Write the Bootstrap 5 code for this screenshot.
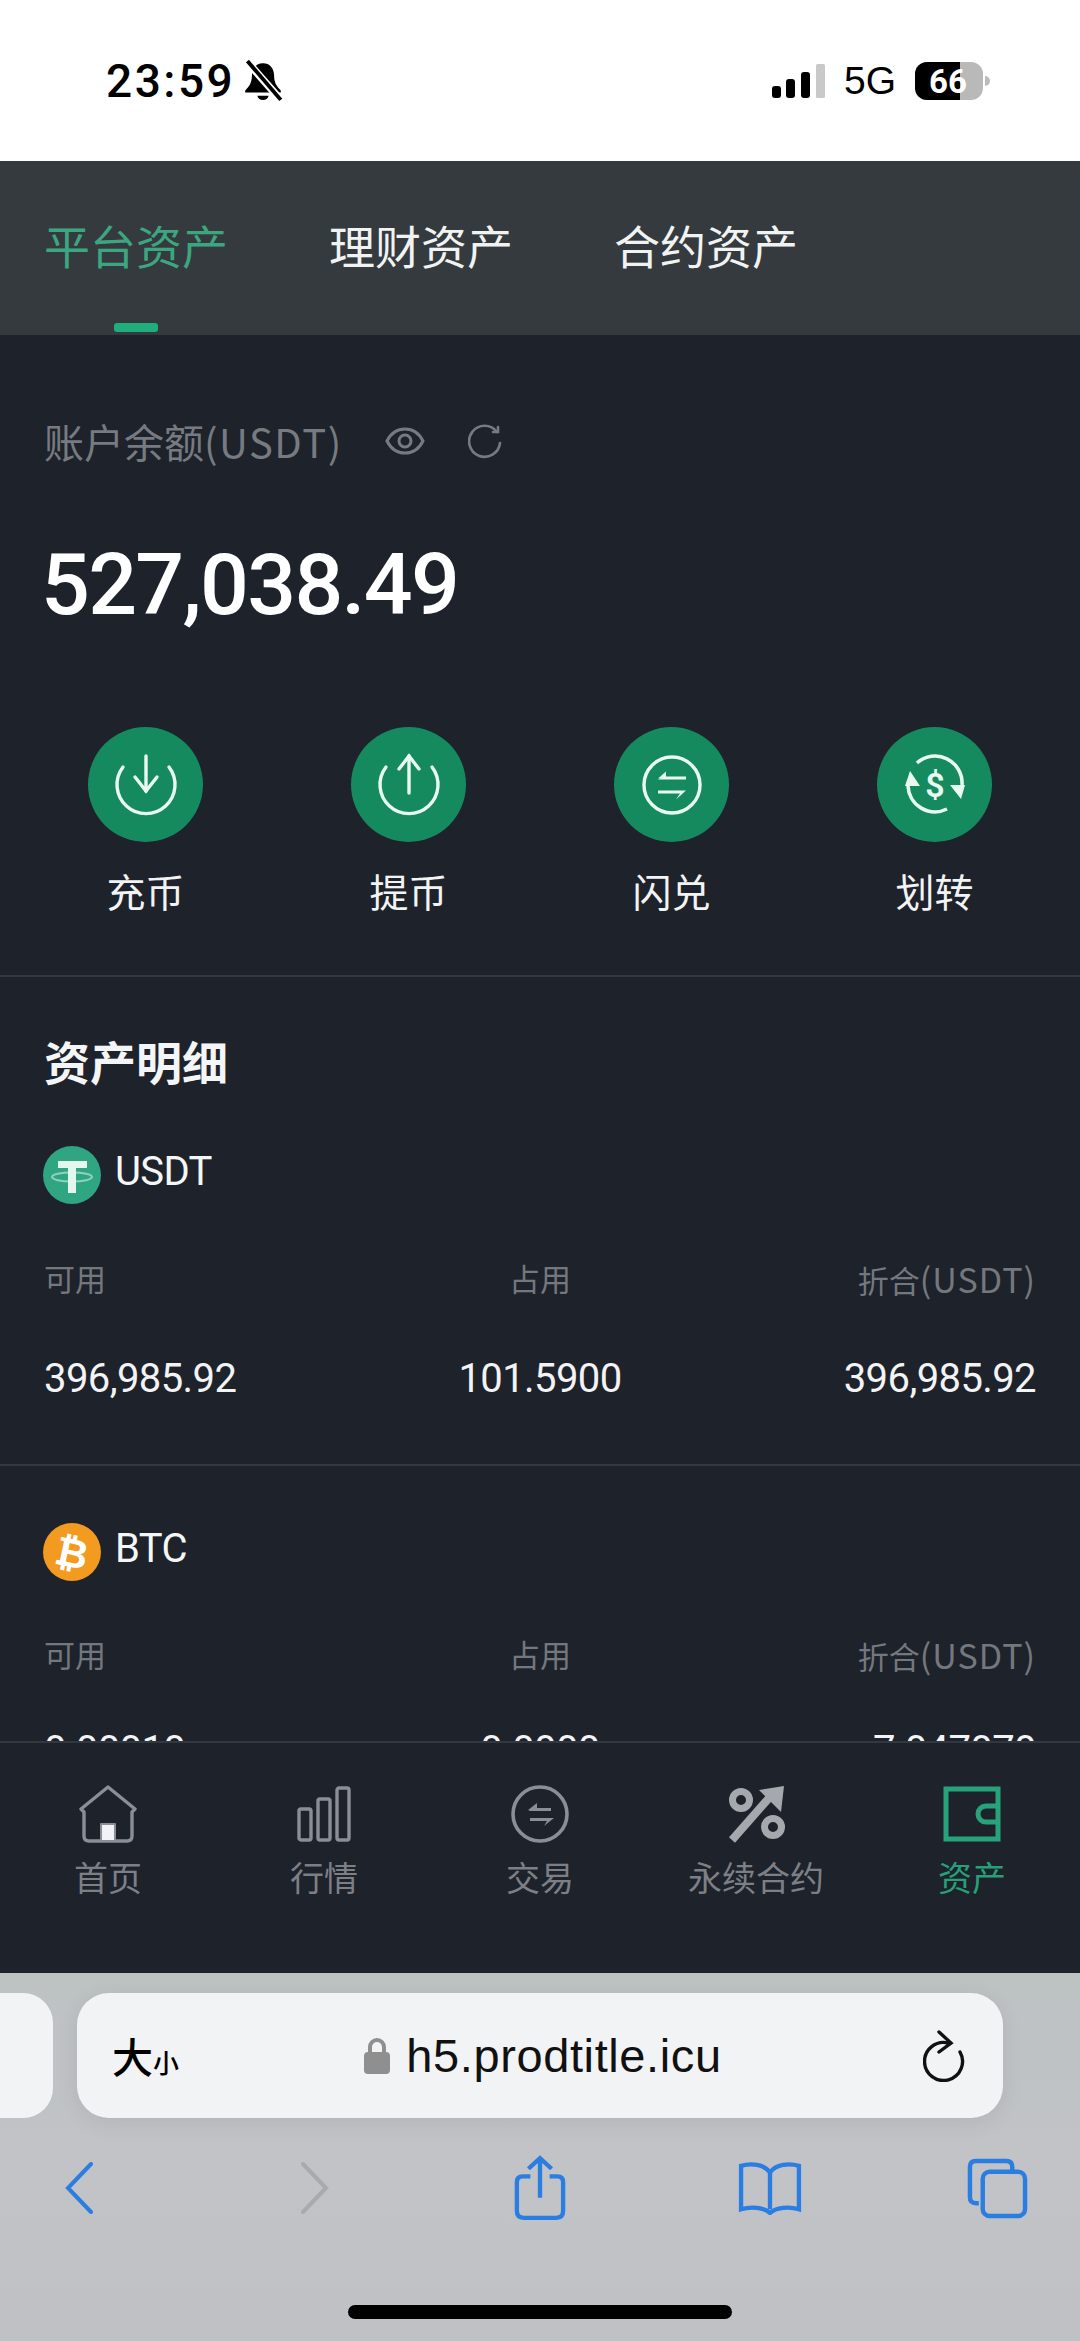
<!doctype html>
<html lang="zh"><head><meta charset="utf-8">
<link href="https://cdn.jsdelivr.net/npm/bootstrap@5.3.0/dist/css/bootstrap.min.css" rel="stylesheet">
<style>
html,body{margin:0;background:#1e222b}
body{width:1080px;height:2341px;overflow:hidden;font-family:"Noto Sans CJK SC",Roboto,sans-serif}
.num{font-family:Roboto,"Noto Sans CJK SC",sans-serif}
.shell{height:2341px}
.sysbar{height:161px;background:#fff;color:#000;padding:0 90px 0 106px}
.clock{font:500 46px/1 Roboto,sans-serif;letter-spacing:2.5px}
.net{font:400 39px/1 "Liberation Sans",sans-serif;margin:0 19px 0 19px}
.tabbar{height:174px;background:#343a3e;padding-left:44px;gap:101px;padding-bottom:8px}
.tabitem{font-size:46px;line-height:1;color:#f1f3f3;font-weight:400}
.tabon{color:#3ca681}
.tabmark{left:70px;bottom:-65px;width:44px;height:9px;background:#1fae7b;border-radius:3px}
.scroller{height:1406px;overflow:hidden}
.topwrap{height:642px;padding:0 44px;border-bottom:2px solid #33373f}
.ballabel{color:#777b81;font-size:40px;line-height:1;padding-top:86px;font-weight:400}
.balunit{letter-spacing:1.5px}
.eyeicon{margin-left:42px}
.reloadicon{margin-left:43px}
.bigval{font-size:86px;line-height:1;color:#fff;font-weight:500;margin:81px 0 0 -3px;letter-spacing:-1.7px}
.actions{margin-top:99px;margin-left:-44px;margin-right:-44px;padding:0 0 0 14px}
.actbtn{width:263px}
.actcirc{width:115px;height:115px;background:#158a5f}
.actlabel{font-size:39px;line-height:1;color:#f2f3f4;margin-top:29px;font-weight:400}
.sect{padding:0 44px}
.headline{font-size:46px;line-height:1;color:#f4f5f6;font-weight:600;padding-top:60px}
.coinrow{margin:63px 0 0 -1px;height:58px}
.coinname{font-size:40px;color:#f5f6f7;line-height:1;margin:-6px 0 0 14px;letter-spacing:-.6px}
.colhead{font-size:31px;line-height:1;color:#74787e;font-weight:400;margin-top:58px}
.colhead.tight{margin-top:57px}
.unitwide{font-size:34px;letter-spacing:1px}
.colval{font-size:40px;line-height:1;color:#f2f3f4;margin-top:63px;letter-spacing:-.6px}
.colval.peek{margin-top:59px}
.third{width:33.333%}
.divide{border-top:2px solid #33373f;margin:65px -44px 0}
.coinrow.coin2{margin-top:57px}
.tabnav{height:232px;border-top:2px solid #33373f;background:#1e222b;padding-top:42px}
.navlabel{font-size:34px;line-height:1;color:#7c8086;margin-top:17px;font-weight:400}
.navon{color:#27a07a}
.navicon{height:58px}
.navicon svg{display:block;margin:0 auto}
.safari{height:368px;background:linear-gradient(180deg,#bdc2c3,#c1c3c6 50%,#bfc1c4)}
.urlrow{padding-top:20px;gap:24px;height:145px}
.sidepill{width:53px;height:125px;background:#f2f3f4;border-radius:0 30px 30px 0}
.urlpill{width:926px;height:125px;background:#f2f3f4;border-radius:32px;padding:0 38px 0 35px;box-shadow:0 4px 22px rgba(0,0,0,.08)}
.urlside{flex:0 0 100px}
.urlside.leftside{flex-basis:109px}
.aa{font-size:41px;color:#000;font-weight:500;line-height:1}
.aa small{font-size:26px}
.urltext{font:400 47px/1 "Liberation Sans",sans-serif;color:#111;letter-spacing:.6px}
.tools{height:88px;margin-top:26px;padding-left:65px}
.tool2{margin-left:208px}
.tool3{margin-left:185px}
.tool4{margin-left:171px}
.tool5{margin-left:164px}
.homebar{width:384px;height:14px;background:#000;border-radius:7px;margin:73px auto 0}
</style></head>
<body>
<div class="shell d-flex flex-column">
  <header class="sysbar d-flex justify-content-between align-items-center">
    <div class="d-flex align-items-center gap-2">
      <span class="clock">23:59</span>
      <svg width="40" height="42" viewBox="0 0 36 40" preserveAspectRatio="none"><path d="M18 3c7 0 10 6 10 12 0 6 2 10 6 14v2H2v-2c4-4 6-8 6-14C8 9 11 3 18 3z" fill="#000"/><path d="M13 34h10a5 4 0 0 1-10 0z" fill="#000"/><path d="M4 2l30 36" stroke="#fff" stroke-width="7"/><path d="M4 1l30 37" stroke="#000" stroke-width="3.5"/></svg>
    </div>
    <div class="d-flex align-items-center">
      <svg width="53" height="34" viewBox="0 0 53 34"><rect x="0" y="22" width="9" height="12" rx="3" fill="#000"/><rect x="14" y="15" width="9" height="19" rx="3" fill="#000"/><rect x="29" y="8" width="9" height="26" rx="3" fill="#000"/><rect x="44" y="0" width="9" height="34" rx="1.5" fill="#c9c9c9"/></svg>
      <span class="net">5G</span>
      <svg width="75" height="38" viewBox="0 0 75 38"><rect x="0" y="0" width="68" height="38" rx="12" fill="#b9b9b9"/><path d="M12 0h33v38H12A12 12 0 0 1 0 26V12A12 12 0 0 1 12 0z" fill="#000"/><path d="M70 14a5 5 0 0 1 0 10z" fill="#bbb"/><text x="33" y="31" text-anchor="middle" font-family="Roboto,sans-serif" font-weight="700" font-size="33" fill="#fff">66</text></svg>
    </div>
  </header>
  <nav class="tabbar d-flex align-items-center">
    <span class="tabitem tabon position-relative">平台资产<span class="tabmark position-absolute"></span></span>
    <span class="tabitem">理财资产</span>
    <span class="tabitem">合约资产</span>
  </nav>
  <main class="scroller">
    <section class="topwrap">
      <div class="ballabel d-flex align-items-center"><span>账户余额<span class="balunit">(USDT)</span></span>
        <svg class="eyeicon" width="40" height="28" viewBox="0 0 40 28" fill="none" stroke="#777b81" stroke-width="3"><path d="M2 14C6 6 12 2 20 2s14 4 18 12c-4 8-10 12-18 12S6 22 2 14z"/><circle cx="20" cy="14" r="6"/></svg>
        <svg class="reloadicon" width="34" height="36" viewBox="0 0 34 36" fill="none" stroke="#777b81" stroke-width="2.6" stroke-linecap="round"><path d="M29 9A15.5 15.5 0 1 0 32 20"/><path d="M30 4v5h-5"/></svg>
      </div>
      <div class="bigval num">527,038.49</div>
      <div class="actions d-flex justify-content-start">
        <div class="actbtn d-flex flex-column align-items-center"><div class="actcirc rounded-circle d-flex align-items-center justify-content-center">
          <svg width="64" height="64" viewBox="0 0 64 64" fill="none" stroke="#e9fbf1" stroke-width="3.4" stroke-linecap="round"><path d="M9 14A29 29 0 1 0 55 14"/><path d="M32 3v35"/><path d="M21 24l11 14 11-14" stroke-linejoin="miter"/></svg></div><div class="actlabel">充币</div></div>
        <div class="actbtn d-flex flex-column align-items-center"><div class="actcirc rounded-circle d-flex align-items-center justify-content-center">
          <svg width="64" height="64" viewBox="0 0 64 64" fill="none" stroke="#e9fbf1" stroke-width="3.4" stroke-linecap="round"><path d="M9 14A29 29 0 1 0 55 14"/><path d="M32 40V3"/><path d="M22 16L32 3l10 13"/></svg></div><div class="actlabel">提币</div></div>
        <div class="actbtn d-flex flex-column align-items-center"><div class="actcirc rounded-circle d-flex align-items-center justify-content-center">
          <svg width="64" height="64" viewBox="0 0 64 64" fill="none" stroke="#e9fbf1" stroke-width="3.4"><circle cx="32" cy="32" r="28"/><path d="M18 26.5h28v-3H24z" fill="#e9fbf1" stroke="none"/><path d="M46 37.500H18v3h22l-4 6z" fill="#e9fbf1" stroke="none"/><path d="M18 25.500l8-7v7z" fill="#e9fbf1" stroke="none"/></svg></div><div class="actlabel">闪兑</div></div>
        <div class="actbtn d-flex flex-column align-items-center"><div class="actcirc rounded-circle d-flex align-items-center justify-content-center">
          <svg width="64" height="64" viewBox="0 0 64 64" fill="none" stroke="#e9fbf1" stroke-width="3.6"><path d="M14 10A27 27 0 0 1 59 32"/><path d="M44 56A27 27 0 0 1 5 33"/><path d="M47 32h15l-4 14z" fill="#e9fbf1" stroke="none"/><path d="M2 33h15l-10-15z" fill="#e9fbf1" stroke="none"/><text x="32" y="44" text-anchor="middle" font-family="Roboto,sans-serif" font-weight="600" font-size="34" fill="#e9fbf1" stroke="none">$</text></svg></div><div class="actlabel">划转</div></div>
      </div>
    </section>
    <section class="sect">
      <div class="headline">资产明细</div>
      <div class="coinrow d-flex align-items-center">
        <svg width="58" height="58" viewBox="0 0 58 58"><circle cx="29" cy="29" r="29" fill="#2fa582"/><ellipse cx="29" cy="31" rx="20" ry="4.500" fill="none" stroke="#8ed3bb" stroke-width="2"/><path d="M15 15h29v7H33v25h-8V22H15z" fill="#e4f7ef"/></svg>
        <span class="coinname num">USDT</span>
      </div>
      <div class="d-flex justify-content-between colhead"><span class="third">可用</span><span class="third text-center">占用</span><span class="third text-end">折合<span class="unitwide">(USDT)</span></span></div>
      <div class="d-flex justify-content-between colval num"><span class="third">396,985.92</span><span class="third text-center">101.5900</span><span class="third text-end">396,985.92</span></div>
      <div class="divide"></div>
      <div class="coinrow coin2 d-flex align-items-center">
        <svg width="58" height="58" viewBox="0 0 58 58"><circle cx="29" cy="29" r="29" fill="#f39a20"/><text x="29" y="44" text-anchor="middle" transform="rotate(12 29 29)" font-family="Roboto,sans-serif" font-weight="700" font-size="40" fill="#fff">₿</text></svg>
        <span class="coinname num">BTC</span>
      </div>
      <div class="d-flex justify-content-between colhead tight"><span class="third">可用</span><span class="third text-center">占用</span><span class="third text-end">折合<span class="unitwide">(USDT)</span></span></div>
      <div class="d-flex justify-content-between colval peek num"><span class="third">0.00010</span><span class="third text-center">0.0000</span><span class="third text-end">7.047070</span></div>
    </section>
  </main>
  <footer class="tabnav row row-cols-5 g-0 text-center">
    <div class="col"><div class="navicon"><svg width="58" height="58" viewBox="0 0 58 58" fill="none" stroke="#8b8f95" stroke-width="3.4" stroke-linejoin="round"><path d="M29 2L2 24l3 3v24q0 5 5 5h38q5 0 5-5V27l3-3z"/><rect x="22" y="39" width="14" height="17" fill="#f2f3f6" stroke="#8b8f95" stroke-width="2"/></svg></div><div class="navlabel">首页</div></div>
    <div class="col"><div class="navicon"><svg width="54" height="58" viewBox="0 0 54 58" fill="none" stroke="#8b8f95" stroke-width="3.400"><rect x="2" y="24" width="12" height="31" rx="2"/><rect x="21" y="14" width="12" height="41" rx="2"/><rect x="40" y="3" width="12" height="52" rx="2"/></svg></div><div class="navlabel">行情</div></div>
    <div class="col"><div class="navicon"><svg width="58" height="58" viewBox="0 0 58 58" fill="none" stroke="#8b8f95" stroke-width="3.600"><circle cx="29" cy="29" r="27"/><path d="M17 26h23v-3H24z" fill="#8b8f95" stroke="none"/><path d="M17 25l9-7v7z" fill="#8b8f95" stroke="none"/><path d="M43 33H19v3h17l-3 5z" fill="#8b8f95" stroke="none"/></svg></div><div class="navlabel">交易</div></div>
    <div class="col"><div class="navicon"><svg width="58" height="58" viewBox="0 0 58 58" fill="none" stroke="#a5a9ae" stroke-width="7"><circle cx="14" cy="15" r="8.500"/><circle cx="46" cy="42" r="8.500"/><path d="M5 55L42 13" stroke-width="8"/><path d="M57 1l-3 26-22-22z" fill="#a5a9ae" stroke="none"/></svg></div><div class="navlabel">永续合约</div></div>
    <div class="col"><div class="navicon"><svg width="58" height="58" viewBox="0 0 58 58" fill="none" stroke="#27a37b" stroke-width="5"><path d="M3 4h52v50H3z"/><path d="M55 21H43a8 8 0 0 0 0 16h12"/></svg></div><div class="navlabel navon">资产</div></div>
  </footer>
  <div class="safari">
    <div class="urlrow d-flex">
      <div class="sidepill"></div>
      <div class="urlpill d-flex align-items-center justify-content-between">
        <span class="aa urlside leftside">大<small>小</small></span>
        <span class="d-flex align-items-center gap-3"><svg width="26" height="36" viewBox="0 0 26 36"><path d="M6 16V9a7 7 0 0 1 14 0v7" fill="none" stroke="#8f8f8f" stroke-width="4"/><rect y="14" width="26" height="22" rx="4" fill="#8f8f8f"/></svg><span class="urltext">h5.prodtitle.icu</span></span>
        <span class="urlside d-flex justify-content-end"><svg width="42" height="52" viewBox="0 0 42 52" fill="none" stroke="#111" stroke-width="3.400" stroke-linecap="round"><path d="M25 13A19 19 0 1 0 37 22"/><path d="M16 2l12 11-12 9"/></svg></span>
      </div>
    </div>
    <div class="tools d-flex align-items-center">
      <svg width="28" height="52" viewBox="0 0 28 52" fill="none" stroke="#2a7de1" stroke-width="4" stroke-linecap="round"><path d="M26 2L3 26l23 24"/></svg>
      <svg class="tool2" width="28" height="52" viewBox="0 0 28 52" fill="none" stroke="#a8abad" stroke-width="4" stroke-linecap="round"><path d="M2 2l23 24L2 50"/></svg>
      <svg class="tool3" width="52" height="66" viewBox="0 0 54 68" fill="none" stroke="#2a7de1" stroke-width="4.500"><path d="M17 22H9q-6 0-6 6v30q0 7 7 7h34q7 0 7-7V28q0-6-6-6h-8"/><path d="M27 44V3M15 14L27 3l12 11"/></svg>
      <svg class="tool4" width="66" height="54" viewBox="0 0 66 56" fill="none" stroke="#2a7de1" stroke-width="4.500"><path d="M33 12C27 3 13 2 3 5v45c10-3 24-2 30 4 6-6 20-7 30-4V5C53 2 39 3 33 12zV50"/></svg>
      <svg class="tool5" width="61" height="61" viewBox="0 0 62 62" fill="none" stroke="#2a7de1" stroke-width="4.500"><path d="M12 46H9q-6 0-6-6V9q0-6 6-6h31q6 0 6 6v4"/><rect x="16" y="14" width="43" height="45" rx="7"/></svg>
    </div>
    <div class="homebar"></div>
  </div>
</div>
<script src="https://cdn.jsdelivr.net/npm/bootstrap@5.3.0/dist/js/bootstrap.bundle.min.js"></script>
</body></html>
